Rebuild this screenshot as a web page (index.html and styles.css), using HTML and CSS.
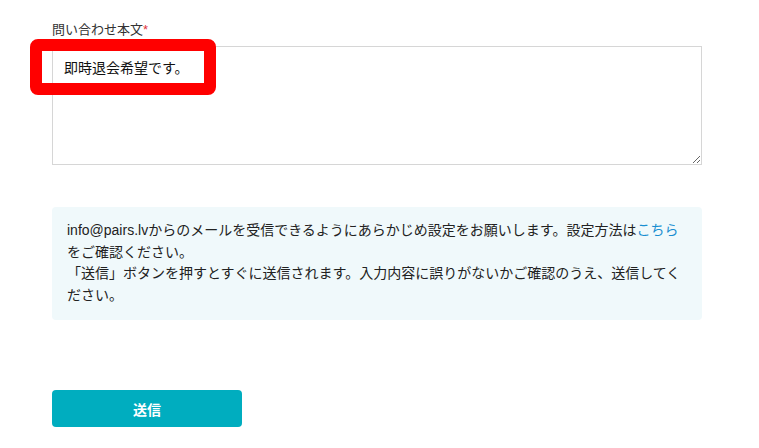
FILE: index.html
```html
<!DOCTYPE html>
<html lang="ja">
<head>
  <meta charset="UTF-8">
  <title>お問い合わせ</title>
  <link rel="stylesheet" href="styles.css">
</head>
<body>
  <div class="form-wrap">
    <!-- 問い合わせ本文 -->
    <div class="field">
      <label class="field-label" for="body">問い合わせ本文<span class="required">*</span></label>
      <div class="textarea-wrap">
        <textarea id="body" class="field-textarea">即時退会希望です。</textarea>
        <div class="highlight"></div>
      </div>
    </div>

    <!-- 注意書き -->
    <div class="notice">
      <p>info@pairs.lvからのメールを受信できるようにあらかじめ設定をお願いします。設定方法は<a href="#">こちら</a>をご確認ください。</p>
      <p>「送信」ボタンを押すとすぐに送信されます。入力内容に誤りがないかご確認のうえ、送信してください。</p>
    </div>

    <button class="submit-btn" type="button">送信</button>
  </div>
</body>
</html>
```

FILE: styles.css
```css
:root {
  --text: #333333;
  --teal: #00adbf;
  --notice-bg: #f0f9fb;
  --link: #1a8fd1;
}
body {
  margin: 0;
  background: #ffffff;
  color: var(--text);
  font-family: "Liberation Sans", Arial, "Noto Sans CJK JP", sans-serif;
}
.form-wrap {
  width: 650px;
  padding: 20px 0 0 52px;
}
/* 本文 */
.field-label {
  display: block;
  font-size: 13px;
  line-height: 20px;
  margin-bottom: 6px;
}
.required {
  color: #e0343b;
}
.textarea-wrap {
  position: relative;
}
.field-textarea {
  display: block;
  box-sizing: border-box;
  width: 650px;
  height: 119px;
  margin: 0;
  padding: 11px 11px;
  border: 1px solid #d6d6d6;
  border-radius: 0;
  font-family: inherit;
  font-size: 14px;
  line-height: 20px;
  color: #111111;
  resize: vertical;
  background: #fff;
  outline: none;
}
/* 赤い注釈枠 */
.highlight {
  position: absolute;
  top: -7px;
  left: -22px;
  width: 162px;
  height: 32px;
  border: 12px solid #ff0000;
  border-radius: 8px;
  pointer-events: none;
}
/* 注意書き */
.notice {
  margin-top: 42px;
  padding: 13px 15px 14px;
  background: var(--notice-bg);
  border-radius: 4px;
  font-size: 14px;
  line-height: 21.5px;
  color: #222222;
}
.notice p {
  margin: 0;
}
.notice a {
  color: var(--link);
  text-decoration: none;
}
.submit-btn {
  display: block;
  width: 190px;
  height: 37px;
  margin-top: 70px;
  border: none;
  border-radius: 4px;
  background: var(--teal);
  color: #ffffff;
  font-family: inherit;
  font-size: 14px;
  font-weight: bold;
  cursor: pointer;
}
```
